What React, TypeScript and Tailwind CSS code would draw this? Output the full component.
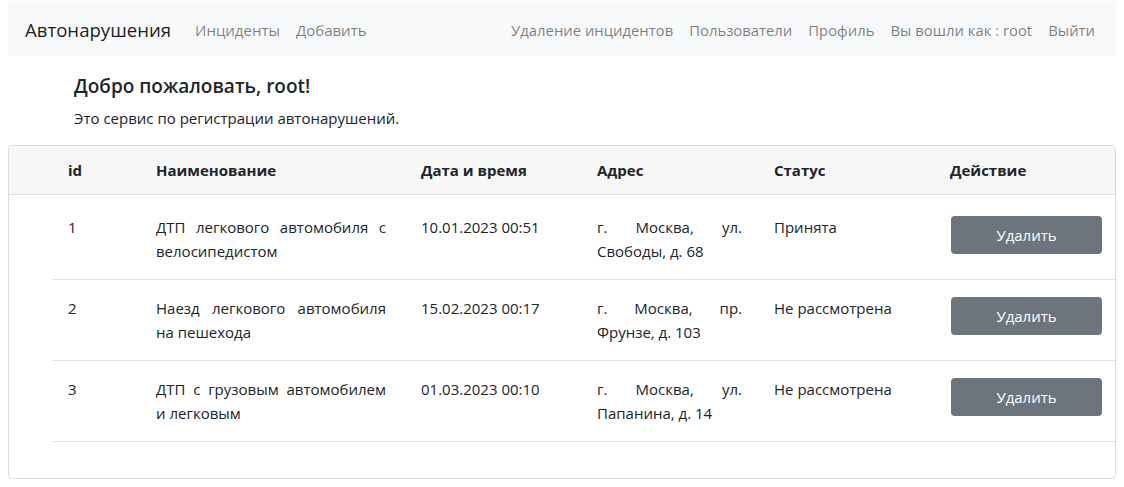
import { Fragment } from "react";

const NAV_LEFT = ["Инциденты", "Добавить"];
const NAV_RIGHT = ["Удаление инцидентов", "Пользователи", "Профиль", "Вы вошли как : root", "Выйти"];

const INCIDENTS = [
  {
    id: 1,
    name: "ДТП легкового автомобиля с велосипедистом",
    date: "10.01.2023 00:51",
    address: "г. Москва, ул. Свободы, д. 68",
    status: "Принята",
  },
  {
    id: 2,
    name: "Наезд легкового автомобиля на пешехода",
    date: "15.02.2023 00:17",
    address: "г. Москва, пр. Фрунзе, д. 103",
    status: "Не рассмотрена",
  },
  {
    id: 3,
    name: "ДТП с грузовым автомобилем и легковым",
    date: "01.03.2023 00:10",
    address: "г. Москва, ул. Папанина, д. 14",
    status: "Не рассмотрена",
  },
];

const COLS = "grid grid-cols-[88px_265px_176px_177px_176px_177px]";

const App = () => {
  return (
    <div className="min-h-screen bg-white px-2 font-['Open_Sans',sans-serif] text-[15px] text-[#212529]">
      <nav className="mt-px flex h-[55px] items-center bg-[#f8f9fa] pt-[3px] pr-[13px] pl-4">
        <span className="mr-4 pl-px text-[18.6px] text-black/90">Автонарушения</span>
        <ul className="flex">
          {NAV_LEFT.map((l) => (
            <li key={l} className="px-2 text-black/50">
              {l}
            </li>
          ))}
        </ul>
        <ul className="ml-auto flex">
          {NAV_RIGHT.map((l) => (
            <li key={l} className="px-2 text-[14.85px] text-black/50">
              {l}
            </li>
          ))}
        </ul>
      </nav>

      <div className="px-[66px] pt-[18px]">
        <h5 className="text-[19px] leading-6 font-semibold">Добро пожаловать, root!</h5>
        <p className="mt-2 leading-6">Это сервис по регистрации автонарушений.</p>
      </div>

      <div className="mt-[15px] mb-2 rounded border border-[#dcdcdc] pb-[36px]">
        <div className="rounded-t border-b border-[#dcdcdc] bg-[#f7f7f7] pl-[43px]">
          <div className={`${COLS} h-12 items-center font-bold`}>
            {["id", "Наименование", "Дата и время", "Адрес", "Статус", "Действие"].map((h) => (
              <div key={h} className="px-4">
                {h}
              </div>
            ))}
          </div>
        </div>
        <div className="pt-1 pl-[43px]">
          {INCIDENTS.map((r) => (
            <Fragment key={r.id}>
              <div className={`${COLS} border-b border-[#dee2e6] pt-4 pb-4 leading-6`}>
                <div className="px-4">{r.id}</div>
                <div className="pr-[19px] pl-4 text-justify">{r.name}</div>
                <div className="px-4">{r.date}</div>
                <div className="px-4 text-justify">{r.address}</div>
                <div className="px-4">{r.status}</div>
                <div className="pr-[10px] pl-4">
                  <button
                    type="button"
                    className="mt-px ml-px h-[38px] w-[151px] rounded bg-[#6c757d] text-white"
                  >
                    Удалить
                  </button>
                </div>
              </div>
            </Fragment>
          ))}
        </div>
      </div>
    </div>
  );
};

export default App;
